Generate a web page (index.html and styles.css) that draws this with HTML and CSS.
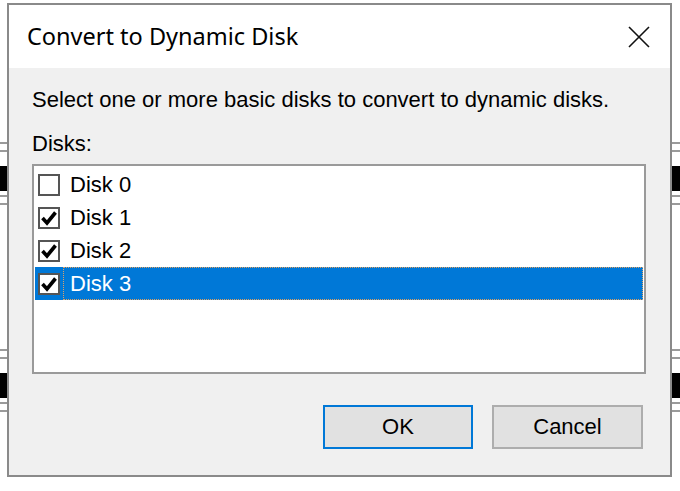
FILE: index.html
```html
<!DOCTYPE html>
<html lang="en">
<head>
    <title>Convert to Dynamic Disk</title>
    <link rel="stylesheet" href="styles.css">
</head>
<body>

    <div class="edge edge-left">
        <div class="rail rail-top">
            <div class="line"></div>
            <div class="line"></div>
            <div class="band"></div>
            <div class="line"></div>
            <div class="line"></div>
        </div>
        <div class="rail rail-bottom">
            <div class="line"></div>
            <div class="line"></div>
            <div class="band"></div>
            <div class="line"></div>
            <div class="line"></div>
        </div>
    </div>
    <div class="edge edge-right">
        <div class="rail rail-top">
            <div class="line"></div>
            <div class="line"></div>
            <div class="band"></div>
            <div class="line"></div>
            <div class="line"></div>
        </div>
        <div class="rail rail-bottom">
            <div class="line"></div>
            <div class="line"></div>
            <div class="band"></div>
            <div class="line"></div>
            <div class="line"></div>
        </div>
    </div>

    <div class="dialog">
        <div class="titlebar">
            <span class="title">Convert to Dynamic Disk</span>
            <svg class="close" width="24" height="24" viewBox="0 0 24 24">
                <path d="M2 2 L22 22 M22 2 L2 22" stroke="#111" stroke-width="1.6" fill="none"/>
            </svg>
        </div>

        <div class="body">
            <p class="text">Select one or more basic disks to convert to dynamic disks.</p>
            <p class="text label">Disks:</p>

            <ul class="disk-list">
                <li class="item">
                    <span class="check"></span>
                    <span class="name">Disk 0</span>
                </li>
                <li class="item">
                    <span class="check">
                        <svg width="18" height="18" viewBox="0 0 18 18"><path d="M2.5 9 L7 14 L15.5 3.5" stroke="#000" stroke-width="3.6" fill="none"/></svg>
                    </span>
                    <span class="name">Disk 1</span>
                </li>
                <li class="item">
                    <span class="check">
                        <svg width="18" height="18" viewBox="0 0 18 18"><path d="M2.5 9 L7 14 L15.5 3.5" stroke="#000" stroke-width="3.6" fill="none"/></svg>
                    </span>
                    <span class="name">Disk 2</span>
                </li>
                <li class="item selected">
                    <span class="check">
                        <svg width="18" height="18" viewBox="0 0 18 18"><path d="M2.5 9 L7 14 L15.5 3.5" stroke="#000" stroke-width="3.6" fill="none"/></svg>
                    </span>
                    <span class="name">Disk 3</span>
                </li>
            </ul>

            <div class="buttons">
                <button class="btn btn-default">OK</button>
                <button class="btn">Cancel</button>
            </div>
        </div>
    </div>

</body>
</html>
```

FILE: styles.css
```css
body {
    margin: 0;
    width: 680px;
    height: 491px;
    overflow: hidden;
    position: relative;
    background: #ffffff;
    padding: 3px 0 0 7px;
    box-sizing: border-box;
    font-family: "Liberation Sans", Arial, sans-serif;
    color: #000;
}

/* windows behind the dialog */
.edge {
    position: absolute;
    top: 0;
    bottom: 0;
}

.edge-left { left: 0; width: 7px; }
.edge-right { right: 0; width: 8px; }

.rail {
    position: absolute;
    left: 0;
    right: 0;
    display: flex;
    flex-direction: column;
}

.rail-top { top: 142px; }
.rail-bottom { top: 349px; }

.line {
    height: 2px;
    background: #9a9a9a;
    margin-bottom: 6px;
}

.line:nth-child(2) { margin-bottom: 14px; }

.band {
    height: 25px;
    background: #000;
    margin-bottom: 4px;
}

/* dialog */
.dialog {
    position: relative;
    z-index: 1;
    width: 665px;
    height: 474px;
    box-sizing: border-box;
    border: 2px solid #8a8a8a;
    background: #f0f0f0;
    display: flex;
    flex-direction: column;
}

.titlebar {
    height: 63px;
    background: #ffffff;
    display: flex;
    align-items: center;
    justify-content: space-between;
    padding: 0 19px 0 18px;
}

.title {
    font-family: "Noto Sans", "Open Sans", sans-serif;
    font-size: 23.5px;
    line-height: 31px;
}

.close {
    display: block;
}

.body {
    padding: 19px 24px 0 23px;
}

.text {
    margin: 0;
    font-size: 22px;
    line-height: 25px;
}

.label {
    margin-top: 19px;
    margin-bottom: 8px;
}

.disk-list {
    list-style: none;
    margin: 0;
    padding: 2px 1px;
    height: 210px;
    box-sizing: border-box;
    background: #ffffff;
    border: 2px solid #9a9a9a;
}

.item {
    height: 33px;
    display: flex;
    align-items: center;
    font-size: 22px;
}

.check {
    width: 22px;
    height: 22px;
    box-sizing: border-box;
    border: 2px solid #555;
    background: #fff;
    margin-left: 3px;
    display: flex;
    align-items: center;
    justify-content: center;
}

.name {
    flex: 1;
    height: 33px;
    line-height: 31px;
    margin-left: 3px;
    padding-left: 6px;
    border: 1px solid transparent;
    box-sizing: border-box;
}

.selected {
    background: #0078d7;
    color: #ffffff;
}

.selected .name {
    border: 1px dotted #e0a060;
}

.buttons {
    display: flex;
    justify-content: flex-end;
    gap: 19px;
    margin-top: 31px;
    padding-right: 3px;
}

.btn {
    width: 151px;
    height: 44px;
    background: #e1e1e1;
    border: 2px solid #adadad;
    font-family: "Liberation Sans", Arial, sans-serif;
    font-size: 22px;
    color: #000;
    padding: 0;
}

.btn-default {
    width: 150px;
    border-color: #0078d7;
}
```
